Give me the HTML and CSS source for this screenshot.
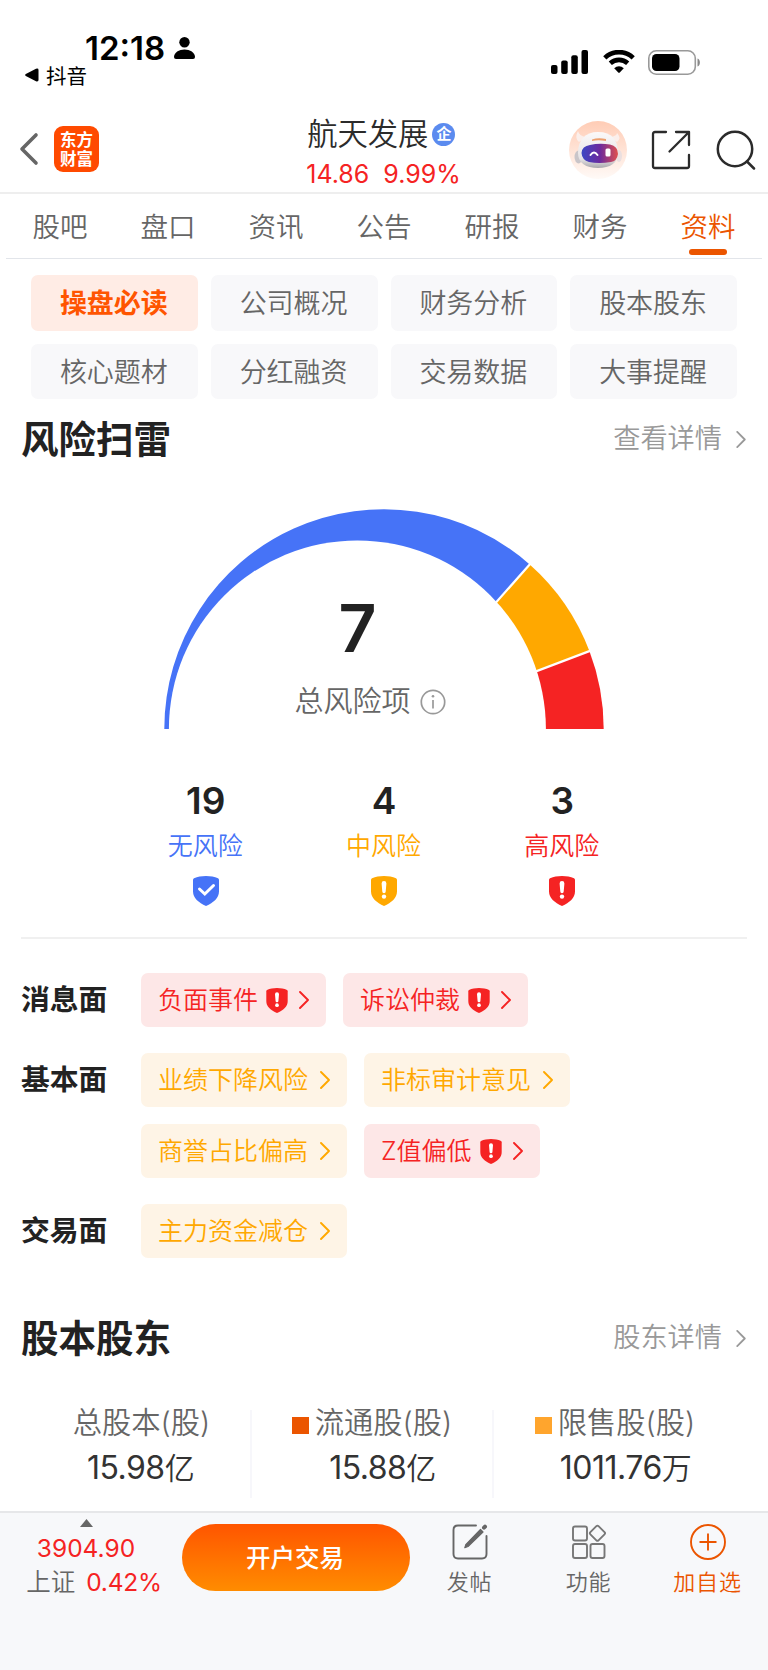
FILE: index.html
```html
<!DOCTYPE html>
<html lang="zh-CN">
<head>
    <meta charset="UTF-8">
    <meta name="viewport" content="width=device-width, initial-scale=1">
    <title>航天发展 - 资料</title>
    <link rel="stylesheet" href="styles.css">
</head>
<body>
    <!-- shared icons -->
    <svg class="sprite" aria-hidden="true">
        <symbol id="shield" viewBox="0 0 26 30">
            <path d="M13 0C17.500 0 21.500.9 25 2.300Q26 2.800 26 4V15.500C26 22 20.500 26.500 13 30C5.500 26.500 0 22 0 15.500V4Q0 2.800 1 2.300C4.500.9 8.500 0 13 0Z" fill="currentColor"/>
        </symbol>
        <symbol id="shield-alert" viewBox="0 0 26 30">
            <use href="#shield" width="26" height="30"/>
            <path d="M10.600 7.500a2.400 2.400 0 0 1 4.800 0L14.700 15.500a1.700 1.700 0 0 1-3.400 0Z" fill="#fff"/>
            <circle cx="13" cy="20.600" r="2.200" fill="#fff"/>
        </symbol>
        <symbol id="arrow" viewBox="0 0 10 18">
            <path d="M1 1L9 9L1 17" fill="none" stroke="currentColor" stroke-width="1.900" stroke-linecap="round" stroke-linejoin="round"/>
        </symbol>
    </svg>

    <div class="status-bar">
        <div class="status-left">
            <div class="clock">12:18
                <svg width="21" height="22" viewBox="0 0 21 22"><ellipse cx="10.500" cy="5.300" rx="5.200" ry="5.300"/><path d="M0 20C0 15.500 5 12.500 10.500 12.500S21 15.500 21 20Q21 22 19 22H2Q0 22 0 20Z"/></svg>
            </div>
            <div class="back-app">
                <svg width="14" height="14" viewBox="0 0 14 14"><path d="M.8 6L11 .7Q13.500 0 13.500 2V12Q13.500 14 11 13.300L.8 8Q-.5 7 .8 6Z"/></svg>
                <span>抖音</span>
            </div>
        </div>
        <div class="status-right">
            <svg width="38" height="24" viewBox="0 0 38 24"><rect y="15" width="6.500" height="9" rx="2"/><rect x="10.200" y="10.500" width="6.500" height="13.500" rx="2"/><rect x="20.300" y="5.300" width="6.500" height="18.700" rx="2"/><rect x="30.500" width="6.500" height="24" rx="2"/></svg>
            <svg width="32" height="24" viewBox="0 0 32 24"><path d="M1.800 7.800A20.500 20.500 0 0 1 30.200 7.800M7.300 13.300A12.700 12.700 0 0 1 24.700 13.300" fill="none" stroke="#000" stroke-width="4.600"/><path d="M11.200 18.200A7 7 0 0 1 20.800 18.200L16.800 22.500Q16 23.200 15.200 22.500Z"/></svg>
            <svg width="53" height="25" viewBox="0 0 53 25"><rect x=".8" y=".8" width="46.500" height="23.400" rx="7.500" fill="none" stroke="#999" stroke-width="1.600"/><rect x="4" y="4" width="27.500" height="17" rx="4.500"/><path d="M49.500 8.500C52.700 9.500 52.700 15.500 49.500 16.500Z" fill="#888"/></svg>
        </div>
    </div>

    <header class="header">
        <div class="header-left">
            <svg width="20" height="34" viewBox="0 0 20 34"><path d="M17 3L3 17L17 31" fill="none" stroke="#666" stroke-width="3.600" stroke-linecap="round" stroke-linejoin="round"/></svg>
            <div class="logo">东方<br>财富</div>
        </div>
        <div class="stock">
            <div class="stock-name">航天发展<span class="badge">企</span></div>
            <div class="stock-price"><span>14.86</span><span>9.99%</span></div>
        </div>
        <div class="header-right">
            <svg width="58" height="58" viewBox="0 0 58 58">
                <defs>
                    <linearGradient id="bg" x2="0" y2="1"><stop offset="0" stop-color="#ffccb5"/><stop offset="1" stop-color="#fffaf7"/></linearGradient>
                    <linearGradient id="visor"><stop offset="0" stop-color="#3b47c4"/><stop offset=".5" stop-color="#6b2a9e"/><stop offset="1" stop-color="#e0504e"/></linearGradient>
                    <linearGradient id="head" x2="0" y2="1"><stop offset="0" stop-color="#fbf9f9"/><stop offset=".75" stop-color="#e6e3e5"/><stop offset="1" stop-color="#aaa8ac"/></linearGradient>
                </defs>
                <circle cx="29" cy="29" r="29" fill="url(#bg)"/>
                <path d="M10 21Q5 17 9 10Q10 15 17 16ZM48 21Q53 17 48 12Q48 15 41 16Z" fill="#fbefeb"/>
                <ellipse cx="9.500" cy="36" rx="4" ry="6.500" fill="#c9c5c9"/>
                <ellipse cx="50" cy="35" rx="3" ry="6" fill="#eadfe0"/>
                <path d="M29 11C43 11 49 19 49 32C49 42 41 47 29 47C17 47 9 42 9 32C9 19 16 11 29 11Z" fill="url(#head)"/>
                <path d="M23 18.500Q29 16.500 37 18V20Q29 18.500 23 20Z" fill="#eda06f"/>
                <path d="M21 24Q30 22 41 23.500Q49 25 49 33Q48 40 42 41Q30 43 20 41Q13 39 12.500 32Q13 25 21 24Z" fill="url(#visor)"/>
                <path d="M21.500 34Q25 29 28.500 34" fill="none" stroke="#fff" stroke-width="2" stroke-linecap="round"/>
                <rect x="36.500" y="27.500" width="5" height="8" rx="1.500" fill="#fff"/>
            </svg>
            <svg class="share" width="40" height="40" viewBox="0 0 40 40" fill="none" stroke="#2b2b2b" stroke-width="2.300" stroke-linecap="round" stroke-linejoin="round"><path d="M15 2H4Q2 2 2 4V36Q2 38 4 38H36Q38 38 38 36V25M25 2H38V15M38 2L18.500 21.500"/></svg>
            <svg width="40" height="40" viewBox="0 0 40 40" fill="none" stroke="#2b2b2b" stroke-width="2.500" stroke-linecap="round"><circle cx="19" cy="19" r="17.200"/><path d="M31 31.500L38 38.500"/></svg>
        </div>
    </header>

    <nav class="tabs">
        <a>股吧</a>
        <a>盘口</a>
        <a>资讯</a>
        <a>公告</a>
        <a>研报</a>
        <a>财务</a>
        <a class="active">资料</a>
    </nav>

    <div class="sub-tabs">
        <a class="active">操盘必读</a>
        <a>公司概况</a>
        <a>财务分析</a>
        <a>股本股东</a>
        <a>核心题材</a>
        <a>分红融资</a>
        <a>交易数据</a>
        <a>大事提醒</a>
    </div>

    <section class="risk">
        <div class="section-title">
            <h2>风险扫雷</h2>
            <a class="more">查看详情<svg width="10" height="17"><use href="#arrow"/></svg></a>
        </div>

        <div class="gauge">
            <svg width="440" height="220" viewBox="-220 -220 440 220">
                <path d="M0 0L-219.700 0A219.700 219.700 0 0 1 145.700-164.500Z" fill="#4673f7"/>
                <path d="M0 0L145.700-164.500A219.700 219.700 0 0 1 205.400-77.900Z" fill="#ffa800"/>
                <path d="M0 0L205.400-77.900A219.700 219.700 0 0 1 219.700 0Z" fill="#f52323"/>
                <path d="M0 0L147-166M0 0L208-78.900" stroke="#fff" stroke-width="2.200"/>
                <circle cx="-26.600" cy="0" r="188.500" fill="#fff"/>
            </svg>
            <div class="gauge-text">
                <div class="total">7</div>
                <div class="total-label">总风险项
                    <svg width="26" height="26" viewBox="0 0 26 26" fill="none" stroke="#999" stroke-width="1.700"><circle cx="13" cy="13" r="11.700"/><path d="M13 11V19.500"/><circle cx="13" cy="7.300" r="1.300" fill="#999" stroke="none"/></svg>
                </div>
            </div>
        </div>

        <div class="counts">
            <div class="count none">
                <b>19</b>
                <span>无风险</span>
                <svg width="26" height="30" viewBox="0 0 26 30"><use href="#shield"/><path d="M6.500 13L11.800 18L20.500 9.500" fill="none" stroke="#fff" stroke-width="3" stroke-linecap="round"/></svg>
            </div>
            <div class="count mid">
                <b>4</b>
                <span>中风险</span>
                <svg width="26" height="30"><use href="#shield-alert"/></svg>
            </div>
            <div class="count high">
                <b>3</b>
                <span>高风险</span>
                <svg width="26" height="30"><use href="#shield-alert"/></svg>
            </div>
        </div>

        <div class="risk-list">
            <div class="risk-row">
                <h3>消息面</h3>
                <div class="tags">
                    <a class="tag high"><span>负面事件</span><svg class="shield" width="22" height="25"><use href="#shield-alert"/></svg><svg width="10" height="18"><use href="#arrow"/></svg></a>
                    <a class="tag high"><span>诉讼仲裁</span><svg class="shield" width="22" height="25"><use href="#shield-alert"/></svg><svg width="10" height="18"><use href="#arrow"/></svg></a>
                </div>
            </div>
            <div class="risk-row">
                <h3>基本面</h3>
                <div class="tags">
                    <a class="tag mid"><span>业绩下降风险</span><svg width="10" height="18"><use href="#arrow"/></svg></a>
                    <a class="tag mid"><span>非标审计意见</span><svg width="10" height="18"><use href="#arrow"/></svg></a>
                    <a class="tag mid"><span>商誉占比偏高</span><svg width="10" height="18"><use href="#arrow"/></svg></a>
                    <a class="tag high"><span>Z值偏低</span><svg class="shield" width="22" height="25"><use href="#shield-alert"/></svg><svg width="10" height="18"><use href="#arrow"/></svg></a>
                </div>
            </div>
            <div class="risk-row">
                <h3>交易面</h3>
                <div class="tags">
                    <a class="tag mid"><span>主力资金减仓</span><svg width="10" height="18"><use href="#arrow"/></svg></a>
                </div>
            </div>
        </div>
    </section>

    <section class="shares">
        <div class="section-title">
            <h2>股本股东</h2>
            <a class="more">股东详情<svg width="10" height="17"><use href="#arrow"/></svg></a>
        </div>
        <div class="share-cols">
            <div class="share-col total-shares">
                <div class="share-label"><i></i>总股本(股)</div>
                <div class="share-value">15.98<span>亿</span></div>
            </div>
            <div class="share-col float-shares">
                <div class="share-label"><i></i>流通股(股)</div>
                <div class="share-value">15.88<span>亿</span></div>
            </div>
            <div class="share-col locked-shares">
                <div class="share-label"><i></i>限售股(股)</div>
                <div class="share-value">1011.76<span>万</span></div>
            </div>
        </div>
    </section>

    <footer class="bottom-bar">
        <div class="index">
            <svg width="13" height="8" viewBox="0 0 13 8"><path d="M6.500 0L13 8H0Z" fill="#666"/></svg>
            <div class="red">3904.90</div>
            <div class="index-line"><span>上证</span><span class="red">0.42%</span></div>
        </div>
        <button class="trade" type="button">开户交易</button>
        <div class="actions">
            <a>
                <svg width="36" height="36" viewBox="0 0 36 36" fill="none" stroke="#666" stroke-width="1.900" stroke-linecap="round"><path d="M24 1.500H6Q1.500 1.500 1.500 6V30Q1.500 34.500 6 34.500H30Q34.500 34.500 34.500 30V12"/><path d="M28.500 5.500L31 8L16 22.500L12.800 23.700L14 20.300Z" fill="#666" stroke-width="1.200" stroke-linejoin="round"/><path d="M32 3.700L33 2.700" stroke-width="4"/></svg>
                <span>发帖</span>
            </a>
            <a>
                <svg width="36" height="36" viewBox="0 0 36 36" fill="none" stroke="#777" stroke-width="1.900" stroke-linejoin="round"><rect x="2" y="2.500" width="14" height="14" rx="2"/><rect x="2" y="20" width="14" height="14" rx="2"/><rect x="19.500" y="20" width="14" height="14" rx="2"/><rect x="20.700" y="3.500" width="11.500" height="11.500" rx="1.500" transform="rotate(45 26.450 9.250)"/></svg>
                <span>功能</span>
            </a>
            <a class="add">
                <svg width="36" height="36" viewBox="0 0 36 36" fill="none" stroke="#eb5500" stroke-width="1.900"><circle cx="18" cy="18" r="17"/><path d="M9.500 18H26.500M18 9.500V26.500"/></svg>
                <span>加自选</span>
            </a>
        </div>
    </footer>
</body>
</html>
```

FILE: styles.css
```css
* {
    box-sizing: border-box;
}
body {
    margin: 0;
    width: 768px;
    height: 1670px;
    display: flex;
    flex-direction: column;
    background-color: #fff;
    color: #222;
    font-family: Inter, "Noto Sans CJK SC", sans-serif;
    font-weight: 350;
    overflow: hidden;
}
svg {
    display: block;
    flex: none;
}
h2, h3 {
    margin: 0;
    font-weight: 700;
}
.sprite {
    display: none;
}

/* Status bar */
.status-bar {
    height: 106px;
    display: flex;
    justify-content: space-between;
    color: #000;
}
.status-left {
    padding: 28px 0 0 25px;
}
.clock {
    display: flex;
    align-items: center;
    gap: 9px;
    height: 40px;
    padding-left: 60px;
    font-size: 33px;
    font-weight: 600;
    letter-spacing: 0;
}
.back-app {
    display: flex;
    align-items: center;
    gap: 7px;
    height: 14px;
    font-size: 20.500px;
    font-weight: 400;
}
.status-right {
    display: flex;
    align-items: flex-start;
    padding: 50px 67px 0 0;
    gap: 13.500px;
}

/* Header */
.header {
    height: 88px;
    display: grid;
    grid-template-columns: 1fr auto 1fr;
    border-bottom: 2px solid #eee;
}
.header-left {
    display: flex;
    align-items: center;
    gap: 15px;
    padding: 0 0 0 19px;
}
.logo {
    width: 45px;
    height: 46px;
    padding-top: 5px;
    border-radius: 9px;
    background-color: #ff4a00;
    color: #fff;
    font-size: 16.500px;
    font-weight: 700;
    line-height: 18.500px;
    text-align: center;
}
.stock {
    padding: 10px 0 0;
}
.stock-name {
    display: flex;
    align-items: center;
    height: 36px;
    font-size: 30.300px;
    line-height: 36px;
    color: #2b2b2b;
}
.badge {
    width: 23px;
    height: 23px;
    margin-left: 4px;
    border-radius: 50%;
    background-color: #5b8bef;
    color: #fff;
    font-size: 15px;
    font-weight: 700;
    line-height: 22px;
    text-align: center;
}
.stock-price {
    display: flex;
    gap: 14px;
    margin-left: -1px;
    padding-top: 4px;
    font-size: 25px;
    font-weight: 400;
    line-height: 36px;
    color: #f52323;
}
.header-right {
    display: flex;
    align-items: center;
    justify-content: flex-end;
    padding: 2px 12px 0 0;
}
.share {
    margin: 0 25px 0 24px;
}

/* Tabs */
.tabs {
    display: flex;
    height: 65px;
    margin: 0 6px;
    border-bottom: 1px solid #e2e5ea;
}
.tabs a {
    flex: 1;
    display: flex;
    flex-direction: column;
    align-items: center;
    padding-top: 12px;
    font-size: 27.500px;
    line-height: 42px;
    color: #666;
}
.tabs .active {
    color: #eb5500;
}
.tabs .active::after {
    content: "";
    width: 38px;
    height: 6px;
    margin-top: 1px;
    border-radius: 3px;
    background-color: #eb5500;
}
.sub-tabs {
    display: grid;
    grid-template-columns: repeat(4, 1fr);
    gap: 13px;
    padding: 16px 31px 0;
}
.sub-tabs a {
    height: 55.500px;
    padding-right: 1px;
    border-radius: 7px;
    background-color: #f8f8fa;
    color: #666;
    font-size: 27px;
    line-height: 58px;
    text-align: center;
}
.sub-tabs .active {
    background-color: #ffece5;
    color: #ff5500;
    font-weight: 700;
}

/* Sections */
.section-title {
    display: flex;
    align-items: center;
    justify-content: space-between;
    height: 50px;
    padding: 0 22px 0 21px;
}
.section-title h2 {
    padding-top: 2px;
    font-size: 37.500px;
    line-height: 50px;
}
.more {
    display: flex;
    align-items: center;
    gap: 14px;
    color: #999;
    font-size: 27.200px;
    line-height: 48px;
}
.risk {
    padding-top: 15px;
}
.gauge {
    display: grid;
    justify-content: center;
    padding-top: 45px;
}
.gauge > * {
    grid-area: 1 / 1;
}
.gauge-text {
    display: flex;
    flex-direction: column;
    align-items: center;
    padding-top: 86px;
}
.total {
    margin-right: 53px;
    font-size: 66px;
    font-weight: 600;
    line-height: 66px;
}
.total-label {
    display: flex;
    align-items: center;
    gap: 9px;
    margin: 20px 28px 0 0;
    font-size: 29px;
    line-height: 42px;
    color: #666;
}
.counts {
    display: grid;
    grid-template-columns: repeat(3, 178.300px);
    justify-content: center;
    height: 210px;
    margin: 0 21px;
    padding-top: 46px;
    border-bottom: 2px solid #f0f0f0;
}
.count {
    display: flex;
    flex-direction: column;
    align-items: center;
}
.count b {
    font-size: 37px;
    font-weight: 600;
    line-height: 52px;
    color: #222;
}
.count span {
    margin-bottom: 11px;
    padding-right: 1px;
    font-size: 25px;
    line-height: 38px;
}
.none {
    color: #4673f7;
}
.mid {
    color: #ffa800;
}
.high {
    color: #f52323;
}
.risk-list {
    display: flex;
    flex-direction: column;
    gap: 25.500px;
    padding: 34px 21px 0;
}
.risk-row {
    display: flex;
}
.risk-row h3 {
    width: 120px;
    font-size: 28.800px;
    line-height: 54px;
}
.tags {
    display: flex;
    flex: 1;
    flex-wrap: wrap;
    gap: 17px;
    padding-right: 120px;
}
.tag {
    display: flex;
    align-items: center;
    height: 54.300px;
    padding: 0 17px;
    border-radius: 7px;
    font-size: 25px;
}
.tag span {
    padding-bottom: 4px;
}
.tag svg {
    margin-left: 11px;
}
.tag .shield {
    margin-left: 8px;
}
.tag.mid {
    background-color: #fef4e6;
}
.tag.mid svg {
    margin-left: 12px;
}
.tag.high {
    background-color: #fde7e7;
}

.shares {
    padding-top: 55px;
}
.share-cols {
    display: grid;
    grid-template-columns: repeat(3, 242px);
    padding: 47px 0 0 10px;
}
.share-col {
    display: flex;
    flex-direction: column;
    align-items: center;
    height: 88px;
    border-right: 2px solid #f7f7fb;
}
.share-col:last-child {
    border-right: none;
}
.share-label {
    display: flex;
    align-items: center;
    margin-top: -8px;
    color: #666;
    font-size: 29.300px;
    line-height: 42px;
}
.share-label i {
    width: 17px;
    height: 17px;
    margin: 5px 6px 0 0;
}
.float-shares i {
    background-color: #eb5500;
}
.locked-shares i {
    background-color: #ffa52d;
}
.share-value {
    display: flex;
    padding-left: 21px;
    font-size: 32px;
    font-weight: 400;
    line-height: 48px;
    letter-spacing: -0.500px;
    color: #333;
}
.share-value span {
    font-size: 30px;
    font-weight: 350;
}

/* Bottom bar */
.bottom-bar {
    flex: none;
    display: flex;
    height: 159px;
    margin-top: auto;
    border-top: 2px solid #e6e7e9;
    background-color: #f7f8fa;
}
.index {
    display: flex;
    flex-direction: column;
    align-items: center;
    width: 172px;
    padding: 6px 0 0 14px;
    margin-right: 10px;
    font-size: 24.500px;
    line-height: 34px;
    color: #666;
}
.index svg {
    margin: 0 14px 4px 0;
}
.index div:nth-child(2) {
    margin-right: 14px;
}
.red {
    color: #f52323;
    font-weight: 400;
}
.index-line {
    display: flex;
    gap: 11px;
    padding-left: 2px;
}
.index-line .red {
    letter-spacing: -0.2px;
}
.trade {
    width: 228px;
    height: 67px;
    margin-top: 11px;
    padding: 0 2px 2px 0;
    border: none;
    border-radius: 34px;
    background-image: linear-gradient(#ff5500, #ff8c00);
    color: #fff;
    font-family: inherit;
    font-size: 24.500px;
    font-weight: 500;
}
.actions {
    display: flex;
}
.actions a {
    display: flex;
    flex-direction: column;
    align-items: center;
    width: 119px;
    padding-top: 11px;
    color: #666;
    font-size: 22px;
    letter-spacing: 0.800px;
}
.actions span {
    margin-top: 5px;
    line-height: 34px;
}
.actions .add {
    color: #eb5500;
}
```
